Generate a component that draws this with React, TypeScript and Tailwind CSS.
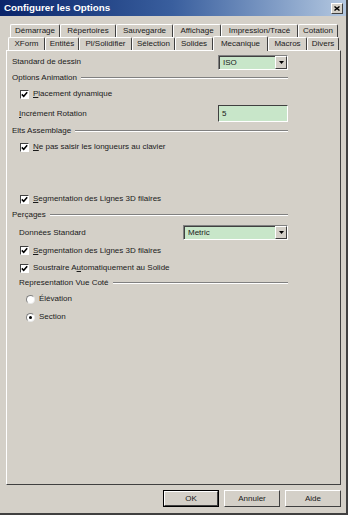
import React from 'react';

const row1 = [
  { label: 'Démarrage', w: 50 },
  { label: 'Répertoires', w: 56 },
  { label: 'Sauvegarde', w: 57 },
  { label: 'Affichage', w: 48 },
  { label: 'Impression/Tracé', w: 77 },
  { label: 'Cotation', w: 40 },
];

const row2 = [
  { label: 'XForm', w: 37 },
  { label: 'Entités', w: 34 },
  { label: 'Pl/Solidifier', w: 53 },
  { label: 'Sélection', w: 43 },
  { label: 'Solides', w: 38 },
  { label: 'Mecanique', w: 55, active: true },
  { label: 'Macros', w: 39 },
  { label: 'Divers', w: 32 },
];

function Tab({ label, w, active }: { label: string; w: number; active?: boolean }) {
  return (
    <div
      style={{ width: w }}
      className={
        active
          ? 'relative z-10 -mb-px h-[15px] flex items-center justify-center bg-[#d4d0c8] border-l border-t border-white border-r border-r-[#404040] rounded-t-[2px]'
          : 'h-[13px] flex items-center justify-center bg-[#d4d0c8] border-l border-t border-white border-r border-r-[#404040] rounded-t-[2px]'
      }
    >
      <span className="leading-none whitespace-nowrap">{label}</span>
    </div>
  );
}

function Group({ title, indent }: { title: string; indent?: boolean }) {
  return (
    <div className={indent ? 'h-[12px] flex items-center pl-[7px]' : 'h-[16px] flex items-center'}>
      <span className="leading-none">{title}</span>
      <div className="flex-1 ml-[4px] border-t border-[#808080] border-b border-b-white" />
    </div>
  );
}

function Check({ children, h }: { children: React.ReactNode; h: number }) {
  return (
    <div style={{ height: h }} className="flex items-center pl-[8px]">
      <div className="w-[9px] h-[9px] bg-white border-t border-l border-[#404040] border-r border-b border-r-white border-b-white flex items-center justify-center">
        <svg width="7" height="7" viewBox="0 0 7 7">
          <path d="M0.8 3.4 L2.7 5.3 L6.2 1.2" fill="none" stroke="#000" strokeWidth="1.5" />
        </svg>
      </div>
      <span className="ml-[4px] leading-none">{children}</span>
    </div>
  );
}

function Radio({ label, on, h }: { label: string; on?: boolean; h: number }) {
  return (
    <div style={{ height: h }} className="flex items-center pl-[14px]">
      <div className="w-[9px] h-[9px] rounded-full bg-white border border-t-[#808080] border-l-[#808080] border-r-[#e8e8e8] border-b-[#e8e8e8] flex items-center justify-center">
        {on && <div className="w-[3px] h-[3px] rounded-full bg-black" />}
      </div>
      <span className="ml-[4px] leading-none">{label}</span>
    </div>
  );
}

function Combo({ value, w }: { value: string; w: number }) {
  return (
    <div
      style={{ width: w }}
      className="h-[15px] flex items-stretch bg-[#c8e6c9] border-t border-l border-[#808080] border-r border-b border-r-white border-b-white"
    >
      <div className="flex-1 flex items-center pl-[3px] border-t border-l border-[#404040]">
        <span className="leading-none">{value}</span>
      </div>
      <div className="w-[12px] bg-[#d4d0c8] border-t border-l border-white border-r border-b border-r-[#404040] border-b-[#404040] flex items-center justify-center">
        <svg width="5" height="3" viewBox="0 0 5 3">
          <path d="M0 0 H5 L2.5 3 Z" fill="#000" />
        </svg>
      </div>
    </div>
  );
}

function Button({ label, def }: { label: string; def?: boolean }) {
  return (
    <div className={def ? 'w-[56px] h-[17px] border border-black' : 'w-[56px] h-[17px]'}>
      <div className="w-full h-full flex items-center justify-center border-t border-l border-white border-r border-b border-r-[#404040] border-b-[#404040]">
        <span className="leading-none">{label}</span>
      </div>
    </div>
  );
}

export default function App() {
  return (
    <div className="w-[348px] h-[515px] bg-[#d4d0c8] border-r-2 border-b-2 border-r-[#404040] border-b-[#404040] text-[8px] text-[#1a1a1a] font-['Liberation_Sans',Arial,sans-serif] overflow-hidden">
      {/* Title bar */}
      <div className="h-[16px] flex items-center justify-between pl-[4px] pr-[3px] bg-gradient-to-r from-[#0a246a] via-[#3a5f9e] to-[#b4c8e0]">
        <span className="text-[9.8px] font-bold text-white leading-none">Configurer les Options</span>
        <div className="w-[12px] h-[11px] bg-[#d4d0c8] border-t border-l border-white border-r border-b border-r-[#404040] border-b-[#404040] flex items-center justify-center">
          <svg width="6" height="5" viewBox="0 0 6 5">
            <path d="M0.5 0.5 L5.5 4.5 M5.5 0.5 L0.5 4.5" stroke="#000" strokeWidth="1.4" />
          </svg>
        </div>
      </div>

      {/* Tabs */}
      <div className="mt-[8px] flex pl-[10px] h-[13px]">
        {row1.map((t) => (
          <Tab key={t.label} label={t.label} w={t.w} />
        ))}
      </div>
      <div className="flex items-end pl-[8px] h-[13px]">
        {row2.map((t) => (
          <Tab key={t.label} label={t.label} w={t.w} active={t.active} />
        ))}
      </div>

      {/* Panel */}
      <div className="ml-[6px] w-[335px] h-[435px] border-t border-l border-white border-r border-b border-r-[#404040] border-b-[#404040]">
        <div className="w-[281px] pl-[5px] pt-[3px]">
          <div className="h-[16px] flex items-center justify-between">
            <span className="leading-none">Standard de dessin</span>
            <Combo value="ISO" w={70} />
          </div>

          <Group title="Options Animation" />
          <Check h={16}>
            <u>P</u>lacement dynamique
          </Check>

          <div className="h-[23px] flex items-center justify-between pl-[7px]">
            <span className="leading-none">
              <u>I</u>ncrément Rotation
            </span>
            <div className="w-[70px] h-[17px] flex items-center pl-[3px] bg-[#c8e6c9] border-t border-l border-[#404040] border-r border-b border-r-white border-b-white">
              <span className="leading-none">5</span>
            </div>
          </div>

          <div className="h-[12px] flex items-center">
            <span className="leading-none">Elts Assemblage</span>
            <div className="flex-1 ml-[4px] border-t border-[#808080] border-b border-b-white" />
          </div>
          <Check h={20}>
            <u>N</u>e pas saisir les longueurs au clavier
          </Check>

          <div className="h-[34px]" />

          <Check h={16}>
            <u>S</u>egmentation des Lignes 3D filaires
          </Check>

          <Group title="Perçages" />
          <div className="h-[19px] flex items-center justify-between pl-[7px]">
            <span className="leading-none">Données Standard</span>
            <Combo value="Metric" w={105} />
          </div>
          <Check h={17}>
            <u>S</u>egmentation des Lignes 3D filaires
          </Check>
          <Check h={18}>
            Soustraire A<u>u</u>tomatiquement au Solide
          </Check>

          <Group title="Representation Vue Coté" indent />
          <Radio label="Élévation" h={20} />
          <Radio label="Section" on h={16} />
        </div>
      </div>

      {/* Buttons */}
      <div className="mt-[5px] flex justify-end gap-[5px] pr-[5px]">
        <Button label="OK" def />
        <Button label="Annuler" />
        <Button label="Aide" />
      </div>
    </div>
  );
}
